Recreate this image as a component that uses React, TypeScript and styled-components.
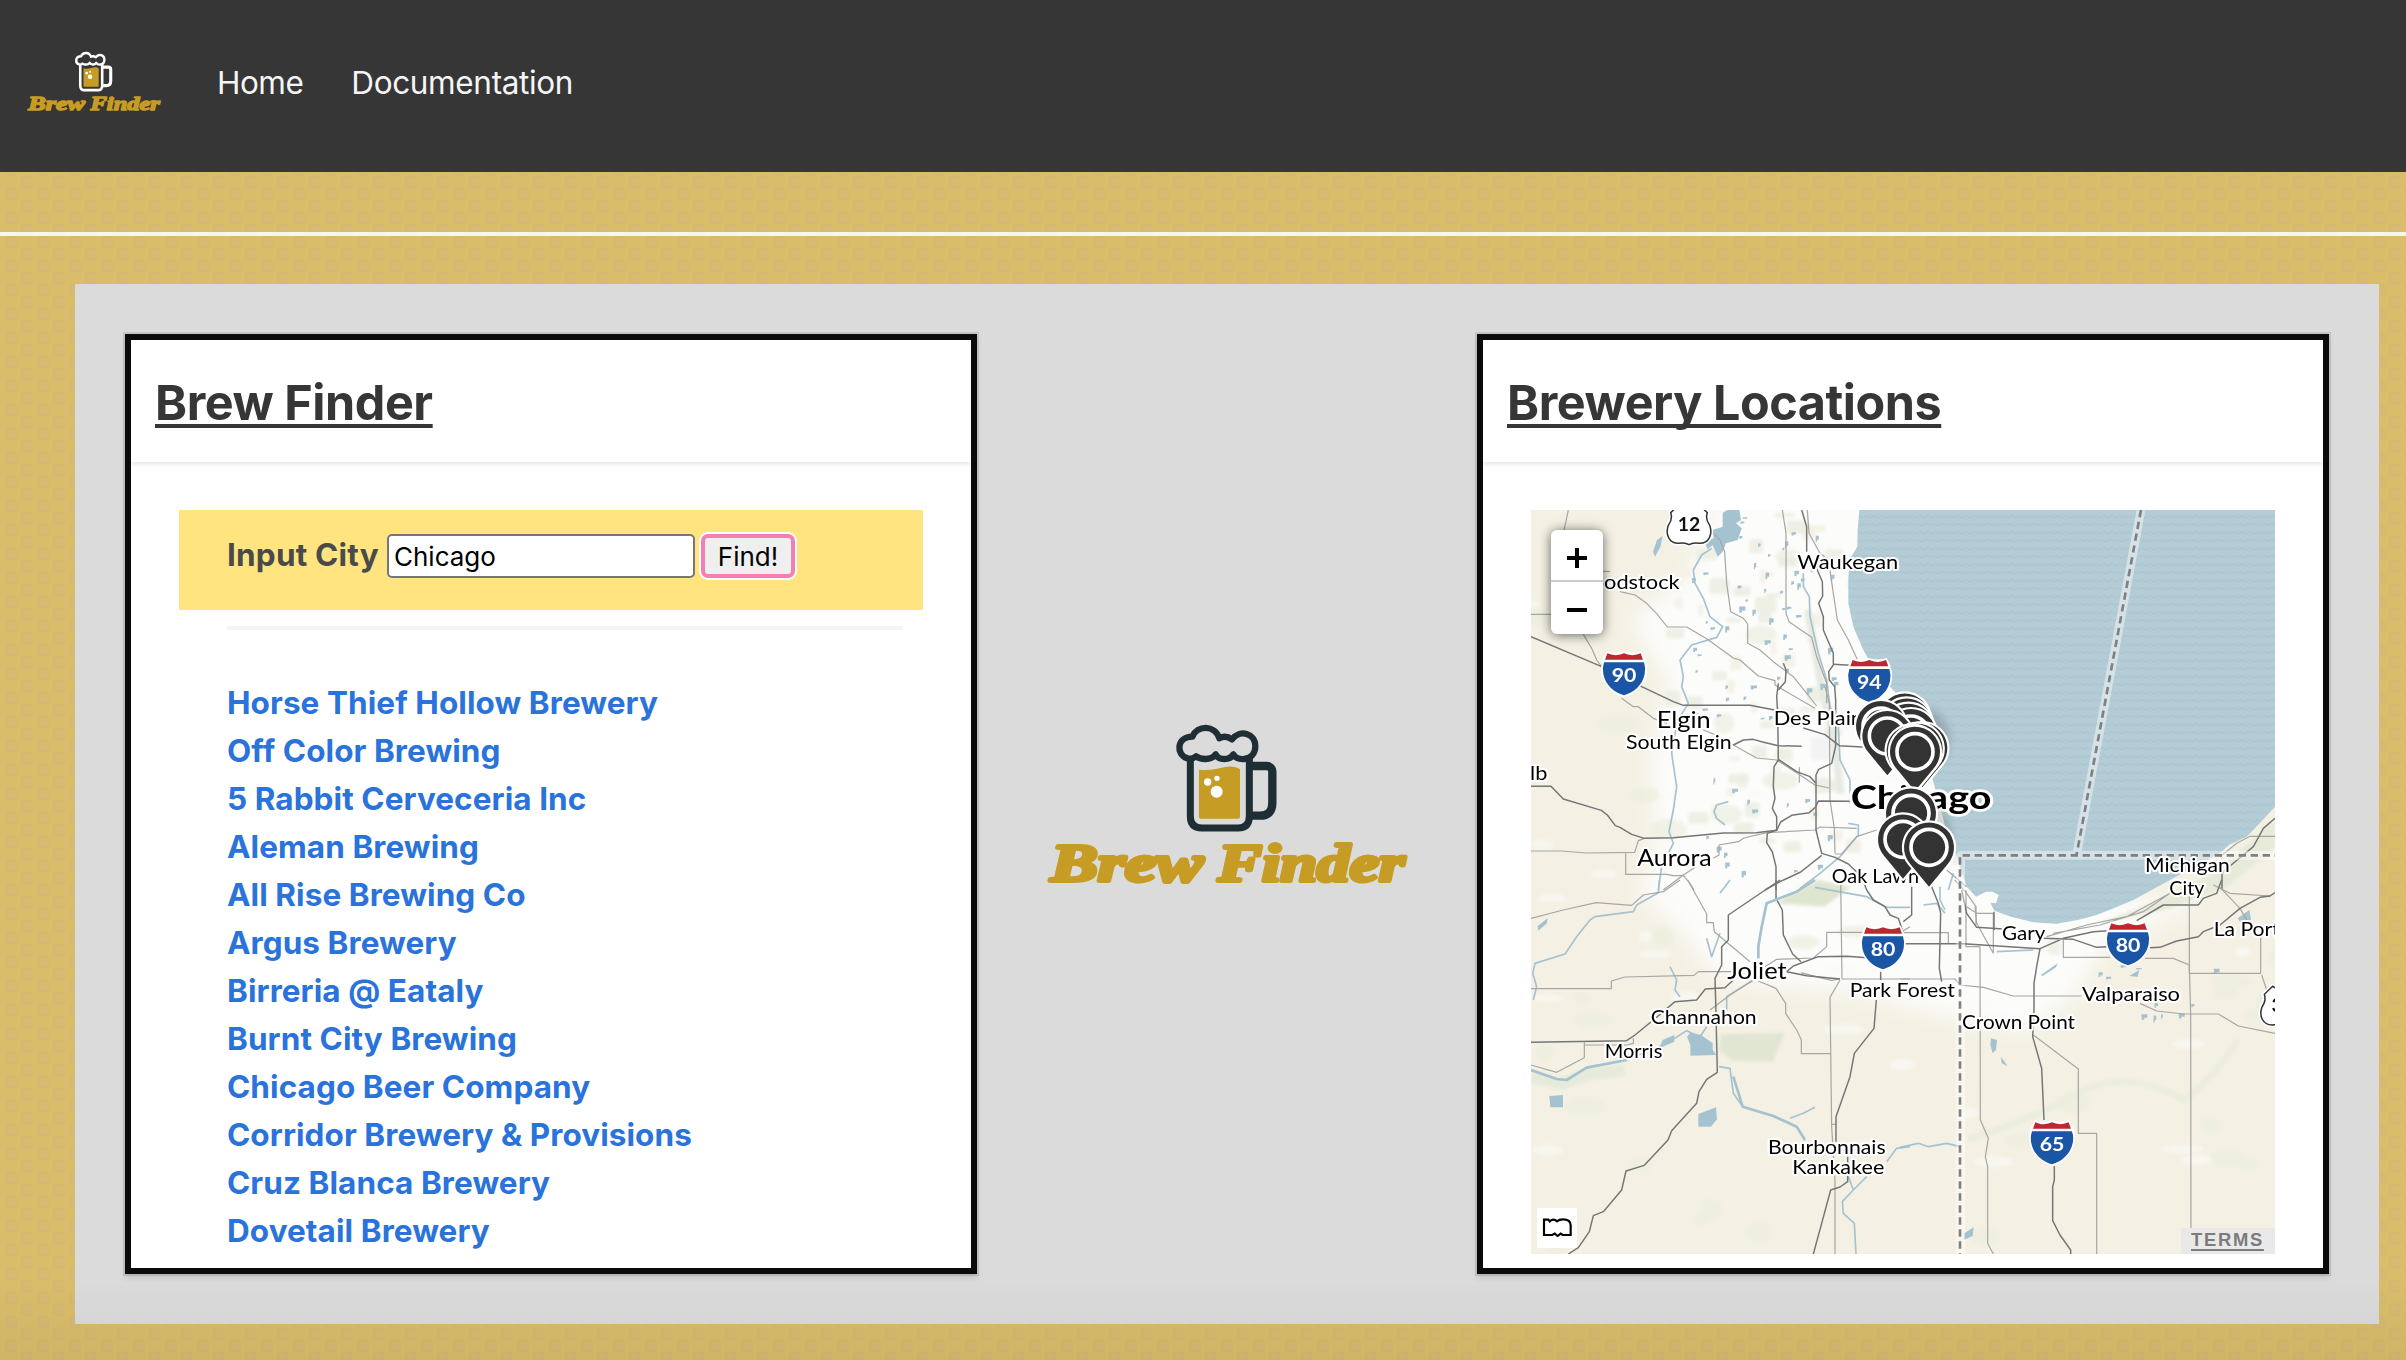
import React from "react";
import styled, { createGlobalStyle } from "styled-components";

const GlobalStyle = createGlobalStyle`
  *, *::before, *::after { box-sizing: border-box; }
  html, body { margin: 0; padding: 0; }
  body {
    font-family: Inter, "Liberation Sans", sans-serif;
    font-size: 32px;
    line-height: 48px;
    color: #4a4a4a;
    overflow: hidden;
  }
`;

const tile =
  "url(\"data:image/svg+xml,%3Csvg xmlns='http://www.w3.org/2000/svg' width='32' height='24'%3E%3Crect width='32' height='24' fill='%23d9bd6b'/%3E%3Cg fill='none' stroke='%23ddbe67' stroke-width='3'%3E%3Cpath d='M3 16v6h14v-8M19 4v6h14v-8'/%3E%3C/g%3E%3Cg fill='%23d8bb70' stroke='%23d4b773' stroke-width='1.6'%3E%3Crect x='5.8' y='16.4' width='10.4' height='11' rx='4'/%3E%3Crect x='5.8' y='-7.6' width='10.4' height='11' rx='4'/%3E%3Crect x='21.8' y='4.4' width='10.4' height='11' rx='4'/%3E%3C/g%3E%3C/svg%3E\")";

const Page = styled.div`
  position: relative;
  height: 1360px;
  background: ${tile} 0 172px;
  display: flex;
  flex-direction: column;
  &::after {
    content: "";
    position: absolute;
    inset: auto 0 0 0;
    height: 80px;
    background: linear-gradient(rgba(10, 10, 10, 0), rgba(10, 10, 10, 0.05));
    pointer-events: none;
  }
`;

const Navbar = styled.nav`
  flex: none;
  height: 172px;
  padding: 0 17px;
  background: #363636;
  display: flex;
  align-items: center;
`;

const NavLogo = styled.div`
  width: 156px;
  margin-right: 44px;
  line-height: 0;
  padding-bottom: 8px;
`;

const NavLink = styled.a<{ $spacing: string }>`
  color: #f5f5f5;
  font-size: 31.5px;
  letter-spacing: ${(p) => p.$spacing};
  margin-right: 48px;
  padding-bottom: 6px;
  white-space: nowrap;
`;

const Rule = styled.hr<{ $margin: string }>`
  flex: none;
  border: 0;
  height: 4px;
  background: #f5f5f5;
  margin: ${(p) => p.$margin};
`;

const Panel = styled.main`
  flex: none;
  display: flex;
  justify-content: space-between;
  margin: 0 27px 0 75px;
  padding: 50px;
  height: 1040px;
  background: #dbdbdb;
`;

const Card = styled.section`
  width: 852px;
  height: 940px;
  border: 6px solid #0a0a0a;
  background: #fff;
  overflow: hidden;
  box-shadow: 0 4px 6px rgba(10, 10, 10, 0.1), 0 0 0 2px rgba(10, 10, 10, 0.1);
`;

const CardHeader = styled.header`
  height: 122px;
  padding: 24px;
  display: flex;
  align-items: center;
  box-shadow: 0 2px 4px rgba(10, 10, 10, 0.1);
`;

const Title = styled.h1`
  margin: 0;
  padding-top: 3px;
  font-size: 48.5px;
  line-height: 60px;
  font-weight: 700;
  letter-spacing: -0.45px;
  color: #363636;
  white-space: nowrap;
  text-decoration: underline;
  text-decoration-thickness: 4px;
  text-underline-offset: 4px;
  text-decoration-skip-ink: none;
`;

const CardBody = styled.div`
  padding: 48px;
`;

const SearchForm = styled.form`
  display: flex;
  align-items: flex-start;
  height: 100px;
  padding: 24px 48px 0 48px;
  background: #ffe480;
`;

const Label = styled.label`
  width: 160px;
  margin-top: -3px;
  font-weight: 700;
  font-size: 31.5px;
  letter-spacing: 0.2px;
  white-space: nowrap;
`;

const CityInput = styled.input`
  width: 308px;
  height: 44px;
  margin: 0 6px 0 0;
  padding: 2px 5px;
  border: 2px solid #767676;
  border-radius: 5px;
  background: #fff;
  color: #000;
  font: 400 26px Inter, "Liberation Sans", sans-serif;
  outline: none;
`;

const FindButton = styled.button`
  width: 94px;
  height: 44px;
  padding: 0;
  border: 4px solid #f67fb1;
  border-radius: 7px;
  background: #efefef;
  color: #000;
  font: 400 26px Inter, "Liberation Sans", sans-serif;
  box-shadow: 0 0 0 2px #fff;
`;

const BreweryList = styled.ul`
  list-style: none;
  margin: 0;
  padding: 1px 48px 0;
`;

const BreweryItem = styled.li`
  height: 48px;
`;

const BreweryLink = styled.a`
  color: #2a73db;
  font-size: 31.5px;
  font-weight: 700;
  letter-spacing: 0.07px;
  white-space: nowrap;
`;

const Center = styled.div`
  width: 500px;
  padding: 3px 0 0 6px;
  display: flex;
  align-items: center;
  justify-content: center;
`;

const MapFrame = styled.div`
  position: relative;
  width: 744px;
  height: 744px;
  overflow: hidden;
  svg { display: block; }
`;

const ZoomControl = styled.div`
  position: absolute;
  left: 20px;
  top: 20px;
  width: 52px;
  border-radius: 6px;
  background: #fff;
  box-shadow: 0 1px 12px rgba(0, 0, 0, 0.6);
`;

const ZoomButton = styled.div<{ $divided?: boolean }>`
  height: 52px;
  padding-top: ${(p) => (p.$divided ? "6px" : "4px")};
  display: flex;
  align-items: center;
  justify-content: center;
  border-bottom: ${(p) => (p.$divided ? "2px solid #ccc" : "0")};
`;

const MapBadge = styled.div`
  position: absolute;
  left: 6px;
  bottom: 6px;
  width: 40px;
  height: 40px;
  border-radius: 2px;
  background: #fff;
`;

const Terms = styled.a`
  position: absolute;
  right: 0;
  bottom: 0;
  width: 94px;
  height: 26px;
  padding-left: 10px;
  background: #e9e9e9;
  color: #7c7c7c;
  font: 700 18.4px/24px "Liberation Sans", Arial, sans-serif;
  letter-spacing: 1.7px;
  text-decoration: underline;
  text-decoration-thickness: 2px;
  text-underline-offset: 3px;
`;

function Logo({ width, ink }: { width: number; ink: string }) {
  const gold = "#c79c24";
  return (
    <svg width={width} height={width / 2} viewBox="0 0 1260 630">
      <g fill="none" stroke={ink} strokeLinejoin="round">
        <path strokeWidth="19" d="M502 172C468 162 468 108 517 107C532 72 584 70 598 112Q616 101 636 115C660 84 706 96 706 136C706 158 692 172 673 174Q650 176 640 160Q632 174 613 174Q594 174 587 160Q578 174 556 174Q538 174 528 166Q516 176 502 172Z" />
        <path strokeWidth="21" d="M511 172V345Q511 381 545 381H655Q688 381 688 345V165" />
        <path strokeWidth="25" d="M690 195H738Q757 195 757 214V306Q757 344 720 344H690" />
      </g>
      <path fill={gold} d="M537 206Q570 210 598 202Q640 190 660 205V348Q660 353 655 353H542Q537 353 537 348Z" />
      <g fill="#fff">
        <circle cx="563" cy="243" r="11" />
        <circle cx="591" cy="232" r="8" />
        <circle cx="590" cy="272" r="18" />
      </g>
      <g
        fill={gold}
        stroke={gold}
        strokeWidth="12"
        strokeLinejoin="round"
        fontFamily="'Liberation Serif', serif"
        fontWeight="700"
        fontStyle="italic"
        fontSize="156"
      >
        <text x="92" y="541" textLength="458" lengthAdjust="spacingAndGlyphs">Brew</text>
        <text x="594" y="541" textLength="560" lengthAdjust="spacingAndGlyphs">Finder</text>
      </g>
    </svg>
  );
}

/* Map drawing: the view is 2232 units wide, three to the pixel,
   and is drawn in four quadrants with an origin each. */
const NW = "translate(-33 -30)";
const NE = "translate(1107 -30)";
const SW = "translate(-33 1110)";
const SE = "translate(1107 1110)";

type RoadSet = { at: string; major: string[]; minor: string[]; rivers: string[] };

const roads: RoadSet[] = [
  {
    at: NW,
    major: [
      "M33 410L245 500L365 560L460 605L490 616H690L775 632",
      "M33 859H93L130 897L244 931L262 945L286 977L300 982L335 1003L373 1015L460 1013L610 999L708 998L770 991L782 966L815 946L868 938L887 921L895 903L990 904",
      "M640 735L670 720L700 718L728 726L775 737L845 739",
      "M845 30L860 80V155M888 200L907 245L908 288L896 310L910 350V390L940 460V495L926 515L928 540L944 560L947 600V738L935 790L896 808L888 825V990L905 1060L945 1072L985 1092L1025 1130L1040 1170",
      "M940 493L990 496",
      "M850 684L915 704L958 737L1040 742",
      "M775 550L770 590L773 640L775 780L762 800L760 860L765 895L757 925L770 950V990L742 1000L740 1028L757 1056L768 1100V1170",
      "M735 1170L780 1145L842 1116L905 1066",
      "M775 778L830 815L870 830L888 850",
      "M790 490L798 510L796 545L775 570",
    ],
    minor: [
      "M145 30L130 100L160 210L270 215",
      "M33 343H93M190 403L215 445L230 480L245 500",
      "M300 275L345 285L380 310L412 343L442 381H500L560 416L640 474L660 480L715 528L765 542V555L885 625",
      "M580 100L600 120L614 155L620 250L632 335L670 355L683 372V430L720 450L760 485L820 530L890 618",
      "M787 30L798 100L798 340L807 365L875 412L890 470L920 550V610",
      "M862 30L867 100L900 160L925 180L940 280L952 360L985 420L1015 485",
      "M305 595L340 620H355L400 655L440 670",
      "M550 690L600 710L640 735L710 774L770 780L840 825L885 855L928 864",
      "M33 1053H125L200 1059L344 1057L355 1022L373 1015",
      "M317 1060V1123H440L460 1127L490 1127L510 1150L522 1170",
      "M430 1170L490 1125L528 1100M580 1075L597 1065V1035L655 1025L672 1014L740 998L885 990L900 981L1010 985",
      "M915 560L928 610L930 900L943 985L945 1060",
      "M945 1062H965L1010 1010L1070 990M838 802V848",
    ],
    rivers: [
      "M575 145L545 165L520 210L525 250L550 295L570 350L608 380L590 412L515 435L480 480L490 530L485 560L505 610L480 650L465 700L455 760L470 860L460 930L447 995L460 1030L425 1100L415 1170",
      "M850 220V260L868 290L870 350L895 460L920 540L930 620L955 680L960 780L990 840V910M985 970L1015 975V1005L960 1070L900 1120L840 1165",
      "M625 905L590 915L582 935L590 955L615 975",
    ],
  },
  {
    at: NE,
    major: ["M1125 955L1090 985L1060 1040L990 1098L966 1120V1170"],
    minor: ["M960 1070L1010 1030L1050 1009H1125M140 1110L200 1160"],
    rivers: ["M160 1120L145 1170"],
  },
  {
    at: SW,
    major: [
      "M33 487L320 482L345 465L400 420L465 365L530 360L556 327L615 323L640 300",
      "M780 0L625 105V180L605 200V255L585 295L588 400L592 577L560 598L537 635L530 670L455 752L444 780L373 856L318 873L305 930L250 995L220 1007L208 1055L175 1103L145 1122",
      "M768 0V55L787 90L790 165L818 222L843 245",
      "M1040 30L1060 60L1095 80L1110 105L1135 115L1150 160",
      "M800 275L820 258L895 230L980 229L1040 233M800 275L860 287L960 297",
      "M1082 275V300M1069 360L1062 445L1003 520L990 590L948 710V785M983 830V905L960 921L932 930L905 1030L880 1122",
    ],
    minor: [
      "M33 115L130 90L228 68L335 76L370 45L430 35L480 0",
      "M503 0L560 102V128H580L583 155L615 182L690 245",
      "M33 326H274V303L315 291L522 286L535 275H640",
      "M33 555L110 577L193 533V487M193 495H320L340 490V475",
      "M700 300L630 345L570 390M715 303L768 325L797 370V400L830 450L844 480V521H930",
      "M735 260L770 238L880 234L920 200V157H1030M1140 158L1170 140",
      "M962 0L966 297H1170M960 300L930 352L935 740L945 900V1122",
      "M935 733H948",
      "M843 278L900 293L935 301L960 297",
    ],
    rivers: [
      "M418 0L415 38L350 75L340 95L225 110L210 120L170 170L135 222L45 250L38 280L50 320L40 360",
      "M33 570L110 597L140 600L200 563L320 540L440 490L500 452L540 470L560 440",
      "M597 560L630 565L640 640L668 680L760 708L830 740L855 780",
      "M885 0L830 35L740 70L725 140L715 200V235M700 300L620 350V390",
      "M885 22L1040 50L1100 82H1170",
      "M450 260L470 300L465 330L480 350M560 175L575 230L600 160M630 0L600 40",
      "M1170 800L1130 805L1100 845M985 890L1000 930L1040 890M1000 930L967 965L970 1000L1003 1030L1008 1122",
      "M810 715L850 700L885 682",
    ],
  },
  {
    at: SE,
    major: [
      "M0 191H190L420 206L490 175L580 155L625 152M430 175L520 178L590 202L625 200",
      "M750 203L780 202L830 183L895 170L910 155L960 135L1020 85L1080 52L1110 48L1125 38",
      "M35 20V105L10 125M95 20L115 70L122 100L118 265L125 305",
      "M185 30L200 100L230 142L310 147",
      "M420 206L410 260L402 310V390L398 470L425 565L432 720",
      "M463 858V900L458 920V1022L480 1065L512 1110V1122",
      "M710 122L790 75H895L910 55L950 40L965 0",
      "M282 95V150",
    ],
    minor: [
      "M240 200L241 720L265 775L256 830L263 860V1090L280 1122",
      "M0 297H165L180 315L250 322L340 348H545M720 370L770 393L850 402H955L1015 438L1125 460",
      "M400 465L535 567V760H590V1122",
      "M868 40V260L872 402L873 1122",
      "M490 180V232H630M735 235H820L868 255V280H1082V170M1085 285L1100 330",
      "M440 170L560 135L680 110L810 40M460 160L600 135L730 95L810 40M225 80L230 130L280 220M200 80L230 100H280V220",
      "M940 15L990 40L1110 48M960 22L1020 85L1040 120",
      "M0 158H145V190M198 30V200H240",
      "M165 0L200 40L228 80V135",
    ],
    rivers: [
      "M0 802L55 790L85 800L140 790L180 800",
      "M70 75L110 70L135 100M120 20V60L135 90M290 215L400 210",
    ],
  },
];

/* Small repeatable scatter for ponds and patches of vegetation. */
function scatter(count: number, seed: number, x: number, y: number, w: number, h: number) {
  let s = seed;
  const next = () => {
    s = (s * 16807) % 2147483647;
    return s / 2147483647;
  };
  return Array.from({ length: count }, () => ({
    x: x + next() * w,
    y: y + next() * h,
    r: next(),
    t: next(),
  }));
}

const groves = scatter(90, 77, 0, 0, 2232, 2232);
const suburbs = scatter(70, 991, 400, 0, 560, 1000);
const ponds = [
  ...scatter(60, 4242, 480, 20, 430, 600),
  ...scatter(18, 313, 520, 600, 400, 500),
  ...scatter(12, 808, 1700, 1330, 400, 200),
];

type PlaceProps = { at: string; x: number; y: number; w: number; size?: number; bold?: boolean; children: string };

const Place = ({ at, x, y, w, size = 57, bold, children }: PlaceProps) => (
  <text
    transform={at}
    x={x}
    y={y}
    textLength={w}
    lengthAdjust="spacingAndGlyphs"
    fontSize={size}
    fontWeight={bold ? 700 : 400}
    fill="#000"
    stroke="#fff"
    strokeWidth={bold ? 16 : 12}
    strokeLinejoin="round"
    paintOrder="stroke"
  >
    {children}
  </text>
);

const Interstate = ({ at, x, y, n }: { at: string; x: number; y: number; n: string }) => (
  <g transform={`${at} translate(${x} ${y})`}>
    <path
      d="M-50-64Q-25-56 0-64Q25-56 50-64Q66-35 64-8C60 30 30 54 0 64C-30 54-60 30-64-8Q-66-35-50-64Z"
      fill="#fff"
      stroke="#fff"
      strokeWidth="9"
      strokeLinejoin="round"
    />
    <path d="M-50-63Q-40-58-25-57Q-10-58 0-63Q10-58 25-57Q40-58 50-63L57-44H-57Z" fill="#be2630" />
    <path d="M-60-36H60Q66-18 62 0C56 32 28 56 0 63C-28 56-56 32-62 0Q-66-18-60-36Z" fill="#1b55a5" />
    <text y="23" textAnchor="middle" fill="#fff" fontSize="58" fontWeight="700" textLength="74" lengthAdjust="spacingAndGlyphs">
      {n}
    </text>
  </g>
);

const usShield =
  "M-30-66Q-15-54 0-64Q15-54 30-66L55-42Q48-24 62-4C72 22 60 50 32 50Q12 46 0 54Q-12 46-32 50C-60 50-72 22-62-4Q-48-24-55-42Z";

const UsRoute = ({ at, x, y, n }: { at: string; x: number; y: number; n: string }) => (
  <g transform={`${at} translate(${x} ${y})`}>
    <path d={usShield} fill="#fff" stroke="#fff" strokeWidth="14" />
    <path d={usShield} fill="#fff" stroke="#333" strokeWidth="4.5" />
    <text y="12" textAnchor="middle" fill="#111" fontSize="58" fontWeight="700">
      {n}
    </text>
  </g>
);

const pins: [number, number][] = [
  [1121, 625],
  [1127, 640],
  [1132, 656],
  [1140, 672],
  [1050, 648],
  [1069, 678],
  [1174, 714],
  [1160, 716],
  [1142, 721],
  [1152, 725],
  [1140, 910],
  [1116, 988],
  [1194, 1012],
];

const Pin = ({ x, y }: { x: number; y: number }) => (
  <g transform={`translate(${x} ${y})`}>
    <path
      d="M0 118L-57 49A75 75 0 1 1 57 49Z"
      fill="#333"
      stroke="#fff"
      strokeWidth="13"
      strokeLinejoin="round"
      paintOrder="stroke"
    />
    <circle r="54" fill="#333" stroke="#fff" strokeWidth="11" />
  </g>
);

const lake =
  "M985 0L980 60L979 110L958 145L952 200V280L967 350L997 420L1030 480L1077 530L1115 570L1150 620L1180 690L1200 790L1222 870L1245 960L1268 1010L1283 1060L1307 1130L1335 1160L1365 1145H1385L1403 1155L1395 1180L1378 1178L1390 1202L1440 1220L1507 1237L1577 1241L1640 1230L1697 1215L1755 1192L1807 1170L1862 1140L1917 1110L1990 1070L2067 1030L2095 1004L2147 980L2190 935L2232 890V0Z";

function BreweryMap() {
  return (
    <svg width="744" height="744" viewBox="0 0 2232 2232" fontFamily="Lato, 'Open Sans', sans-serif">
      <defs>
        <pattern id="waves" width="46" height="48" patternUnits="userSpaceOnUse">
          <rect width="46" height="48" fill="#b3ccd6" />
          <path d="M0 20Q6 26 12 20T23 20T35 20T46 20M-6 44Q0 50 6 44T17 44T29 44T46 44" fill="none" stroke="#acc6d1" strokeWidth="3.5" />
        </pattern>
        <filter id="soft" x="-20%" y="-20%" width="140%" height="140%">
          <feGaussianBlur stdDeviation="28" />
        </filter>
        <filter id="haze" x="-20%" y="-20%" width="140%" height="140%">
          <feGaussianBlur stdDeviation="5" />
        </filter>
        <filter id="shade" x="-50%" y="-50%" width="200%" height="200%">
          <feGaussianBlur stdDeviation="14" />
        </filter>
      </defs>
      <rect width="2232" height="2232" fill="#f4f1e4" />
      <path
        d="M560-60L480 200L300 330L420 520L360 760L380 1000L330 1150L470 1280L560 1400L700 1420L960 1440L1180 1500L1500 1560L1640 1440L1720 1300L2000 1180L1700 1160L1300 900L1100 -60Z"
        fill="#fcfcfb"
        filter="url(#soft)"
      />
      <g filter="url(#haze)">
        {groves.map((g, i) => (
          <ellipse key={i} cx={g.x} cy={g.y} rx={18 + g.r * 45} ry={10 + g.t * 22} fill={g.t > 0.4 ? "#edeede" : "#faf9f3"} opacity="0.7" />
        ))}
        {suburbs.map((g, i) => (
          <rect key={i} x={g.x} y={g.y} width={14 + g.r * 50} height={12 + g.t * 36} rx="8" fill={g.r > 0.5 ? "#eceee2" : "#f4f1e4"} opacity="0.9" />
        ))}
        <path d="M570 1572L762 1568L725 1655L600 1650L565 1620Z" fill="#e1e6d3" />
        <path d="M1310 1888Q1500 1830 1640 1750T1960 1770Q2060 1690 2120 1590" fill="none" stroke="#ebedde" strokeWidth="20" />
        <path d="M830 300L870 520L910 700L930 850" fill="none" stroke="#e6eae0" strokeWidth="22" />
        <path d="M0 1700L90 1720L180 1690L280 1680" fill="none" stroke="#e6eada" strokeWidth="36" />
        <path d="M1880 1175L2060 1080L2232 930V1010L2090 1130L1900 1200L1700 1240Z" fill="#e6ead9" />
        <path d="M730 1180L860 1110L960 1130L880 1190Z" fill="#dfe6cf" />
        <rect x="840" y="680" width="60" height="70" fill="#f3f3f3" />
      </g>
      <path d={lake} fill="url(#waves)" />
      <g fill="#a5c2d0">
        {ponds.map((p, i) => (
          <path key={i} d={`M${p.x} ${p.y}h${5 + p.r * 14}v${4 + p.t * 9}h-${3 + p.r * 7}v${p.t * 7}h-${3 + p.r * 5}z`} />
        ))}
        <path d="M575 8L590 0H625L630 30L615 40L632 55L620 90L585 100L575 125L560 140L545 105L530 118L520 95L548 85L545 60L575 50Z" />
        <path d="M378 90L395 78L388 110L372 140L366 125Z" />
        <path d="M55 1758L96 1755V1792H58ZM502 1812L555 1792L558 1828L540 1850H502Z" />
        <path d="M478 1568L510 1575L545 1600V1620L556 1635L478 1637V1605L468 1580Z" />
        <path d="M395 1590L430 1575V1595L385 1615Z" />
        <path d="M1380 1585L1398 1590L1395 1620L1385 1630L1378 1605ZM1410 1640L1430 1668L1412 1660Z" />
        <path d="M1300 2170L1328 2152L1325 2178L1298 2190Z" />
        <path d="M1530 1395L1580 1360L1575 1372L1535 1398ZM1795 1398L1825 1380L1820 1400Z" />
        <path d="M20 1248L50 1225L48 1240L22 1262ZM2120 1225L2155 1200L2160 1230L2130 1240Z" />
      </g>

      <g fill="none" strokeLinejoin="round">
        {roads.map((set) => (
          <g key={set.at} transform={set.at}>
            {set.rivers.map((d) => (
              <path key={d} d={d} stroke="#a5c2d0" strokeWidth="5" />
            ))}
            {set.minor.map((d) => (
              <path key={d} d={d} stroke="#a6a6a4" strokeWidth="3.6" />
            ))}
            {set.major.map((d) => (
              <path key={d} d={d} stroke="#757575" strokeWidth="4.4" />
            ))}
          </g>
        ))}
        <g transform={SW} stroke="#a5c2d0" strokeWidth="8">
          <path d="M885 0L830 35L740 70L725 140L715 200V235M33 570L110 597L140 600L200 563L320 540M640 590L668 680L760 708L830 740L855 780" />
        </g>
        <path d="M1830 0L1637 1033M2232 1036H1289V2232" stroke="#fff" strokeOpacity="0.45" strokeWidth="26" />
        <path d="M1830 0L1637 1033M1295 1036H2232M1287 1042V2232" stroke="#808080" strokeWidth="8" strokeDasharray="22 14" />
      </g>

      <Place at={NW} x={832} y={208} w={303}>Waukegan</Place>
      <Place at={NW} x={151} y={267} w={328}>Woodstock</Place>
      <Place at={NW} x={410} y={684} w={162} size={68}>Elgin</Place>
      <Place at={NW} x={318} y={746} w={317}>South Elgin</Place>
      <Place at={NW} x={30} y={841} w={52}>lb</Place>
      <Place at={NW} x={352} y={1098} w={223} size={68}>Aurora</Place>
      <Place at={NW} x={761} y={676} w={331}>Des Plaines</Place>
      <Place at={NW} x={935} y={1148} w={262}>Oak Lawn</Place>
      <Place at={NW} x={992} y={927} w={422} size={100} bold>Chicago</Place>
      <Place at={NE} x={735} y={1115} w={254}>Michigan</Place>
      <Place at={SE} x={808} y={46} w={105}>City</Place>
      <Place at={SE} x={306} y={181} w={130}>Gary</Place>
      <Place at={SE} x={941} y={168} w={232}>La Porte</Place>
      <Place at={SE} x={546} y={362} w={294}>Valparaiso</Place>
      <Place at={SE} x={186} y={448} w={339}>Crown Point</Place>
      <Place at={SW} x={989} y={351} w={316}>Park Forest</Place>
      <Place at={SW} x={622} y={297} w={178} size={70}>Joliet</Place>
      <Place at={SW} x={392} y={432} w={318}>Channahon</Place>
      <Place at={SW} x={254} y={534} w={173}>Morris</Place>
      <Place at={SW} x={744} y={823} w={353}>Bourbonnais</Place>
      <Place at={SW} x={817} y={883} w={276}>Kankakee</Place>

      <Interstate at={NW} x={312} y={523} n="90" />
      <Interstate at={NW} x={1048} y={543} n="94" />
      <Interstate at={SW} x={1089} y={205} n="80" />
      <Interstate at={SE} x={684} y={193} n="80" />
      <Interstate at={SE} x={456} y={790} n="65" />
      <UsRoute at={NW} x={507} y={80} n="12" />
      <UsRoute at={SE} x={1148} y={385} n="35" />

      <g filter="url(#shade)" fill="#000" opacity="0.16">
        <ellipse cx="1178" cy="685" rx="78" ry="90" />
        <ellipse cx="1185" cy="965" rx="75" ry="75" />
      </g>
      {pins.map(([x, y]) => (
        <Pin key={`${x}-${y}`} x={x} y={y} />
      ))}
    </svg>
  );
}

const breweries = [
  "Horse Thief Hollow Brewery",
  "Off Color Brewing",
  "5 Rabbit Cerveceria Inc",
  "Aleman Brewing",
  "All Rise Brewing Co",
  "Argus Brewery",
  "Birreria @ Eataly",
  "Burnt City Brewing",
  "Chicago Beer Company",
  "Corridor Brewery & Provisions",
  "Cruz Blanca Brewery",
  "Dovetail Brewery",
];

export default function App() {
  return (
    <Page>
      <GlobalStyle />
      <Navbar>
        <NavLogo>
          <Logo width={156} ink="#fff" />
        </NavLogo>
        <NavLink $spacing="-0.5px">Home</NavLink>
        <NavLink $spacing="-0.35px">Documentation</NavLink>
      </Navbar>
      <Rule $margin="60px 0 48px" />
      <Panel>
        <Card>
          <CardHeader>
            <Title>Brew Finder</Title>
          </CardHeader>
          <CardBody>
            <SearchForm onSubmit={(e) => e.preventDefault()}>
              <Label htmlFor="city">Input City</Label>
              <CityInput id="city" defaultValue="Chicago" />
              <FindButton type="submit">Find!</FindButton>
            </SearchForm>
            <Rule $margin="16px 20px 48px 48px" />
            <BreweryList>
              {breweries.map((name) => (
                <BreweryItem key={name}>
                  <BreweryLink>{name}</BreweryLink>
                </BreweryItem>
              ))}
            </BreweryList>
          </CardBody>
        </Card>
        <Center>
          <Logo width={420} ink="#1f2d35" />
        </Center>
        <Card>
          <CardHeader>
            <Title>Brewery Locations</Title>
          </CardHeader>
          <CardBody>
            <MapFrame>
              <BreweryMap />
              <ZoomControl>
                <ZoomButton $divided>
                  <svg width="22" height="22" viewBox="0 0 22 22">
                    <path d="M11 1V21M1 11H21" stroke="#000" strokeWidth="4" />
                  </svg>
                </ZoomButton>
                <ZoomButton>
                  <svg width="22" height="22" viewBox="0 0 22 22">
                    <path d="M1 11H21" stroke="#000" strokeWidth="4" />
                  </svg>
                </ZoomButton>
              </ZoomControl>
              <MapBadge>
                <svg width="40" height="40" viewBox="0 0 120 120">
                  <path
                    d="M21 35H34L38 40Q49 30 60 40Q66 34 78 34Q101 34 101 52V81H77L71 77L62 84L53 77L46 81H21Z"
                    fill="none"
                    stroke="#000"
                    strokeWidth="6.5"
                  />
                </svg>
              </MapBadge>
              <Terms>TERMS</Terms>
            </MapFrame>
          </CardBody>
        </Card>
      </Panel>
    </Page>
  );
}
